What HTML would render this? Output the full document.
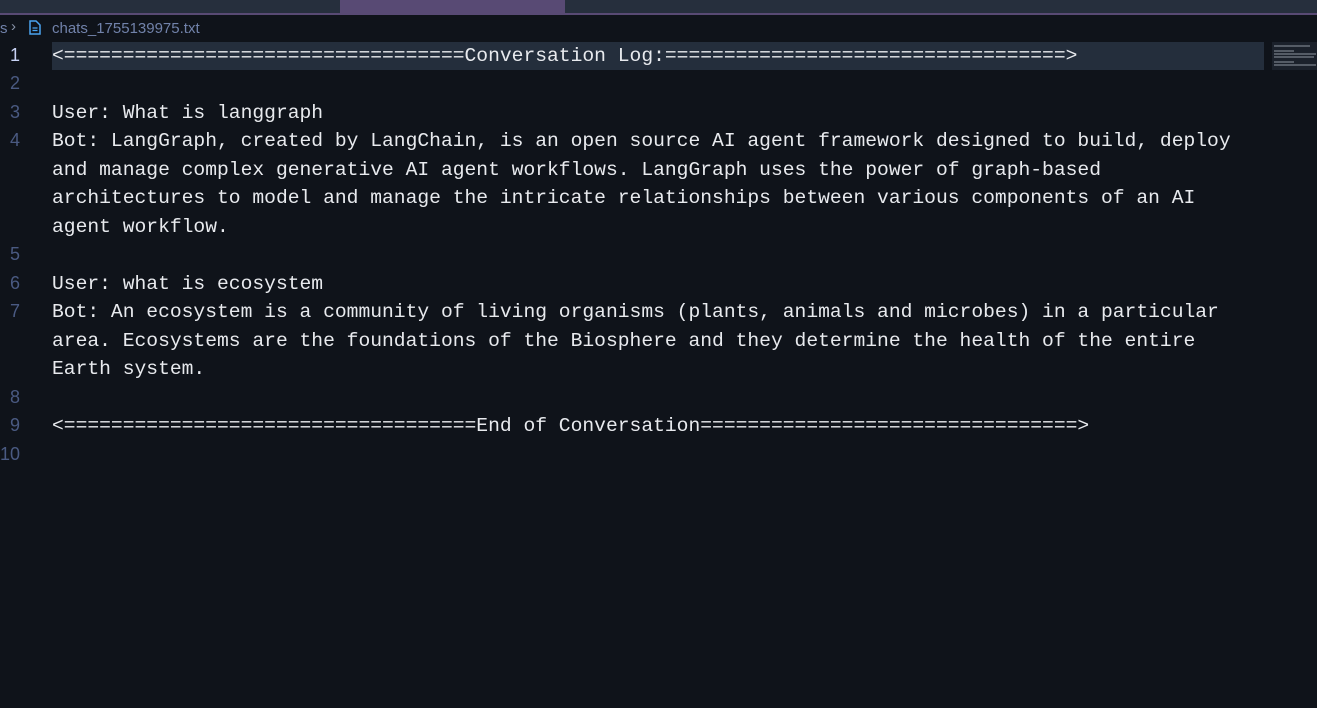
<!DOCTYPE html>
<html><head><style>
html,body{margin:0;padding:0;width:1317px;height:708px;overflow:hidden;background:#0f131a;}
.tabs{position:absolute;left:0;top:0;width:1317px;height:13px;background:#262f3d;}
.act{position:absolute;left:340px;top:0;width:225px;height:13px;background:#584a74;}
.tl{position:absolute;left:0;top:13px;width:1317px;height:2px;background:#584a74;}
.crumb{position:absolute;left:0;top:15px;height:27px;width:1317px;background:#0f131a;font:15px "Liberation Sans",sans-serif;color:#7182aa;}
.ed{position:absolute;left:0;top:44.5px;width:1317px;}
.row{position:relative;height:28.5px;line-height:28.5px;}
.ln{position:absolute;left:0;width:20px;text-align:right;font:18px "Liberation Sans",sans-serif;color:#4a5a82;}
.tx{position:absolute;left:52px;font:19.65px "Liberation Mono",monospace;color:#e8eaee;white-space:pre;}
.hl{position:absolute;left:52px;top:-3px;width:1212px;height:28.5px;background:#242e3c;}
.mm{position:absolute;left:1272px;top:42px;width:45px;height:28px;background:#1b212b;}
.mm i{position:absolute;left:2px;height:2px;background:#555c66;}
</style></head><body>
<div class="tabs"></div><div class="act"></div><div class="tl"></div>
<div class="crumb">
<span style="position:absolute;left:0;top:5px">s</span>
<span style="position:absolute;left:11px;top:3px;color:#8893a8">›</span>
<svg style="position:absolute;left:29px;top:5px" width="12" height="15" viewBox="0 0 12 15"><path d="M1 1h6l4 4v9H1z" fill="none" stroke="#4aa3f0" stroke-width="1.5"/><path d="M3.5 8h5M3.5 10.5h5" stroke="#4aa3f0" stroke-width="1.2"/></svg>
<span style="position:absolute;left:52px;top:5px">chats_1755139975.txt</span>
</div>
<div class="mm"><i style="top:3px;width:36px"></i><i style="top:8px;width:20px"></i><i style="top:11px;width:42px"></i><i style="top:14px;width:40px"></i><i style="top:19px;width:20px"></i><i style="top:22px;width:42px"></i></div>
<div class="ed">
<div class="row"><div class="hl"></div><span class="ln" style="color:#c8d3f5">1</span><span class="tx">&lt;==================================Conversation Log:==================================&gt;</span></div>
<div class="row"><span class="ln">2</span></div>
<div class="row"><span class="ln">3</span><span class="tx">User: What is langgraph</span></div>
<div class="row"><span class="ln">4</span><span class="tx">Bot: LangGraph, created by LangChain, is an open source AI agent framework designed to build, deploy</span></div>
<div class="row"><span class="tx">and manage complex generative AI agent workflows. LangGraph uses the power of graph-based</span></div>
<div class="row"><span class="tx">architectures to model and manage the intricate relationships between various components of an AI</span></div>
<div class="row"><span class="tx">agent workflow.</span></div>
<div class="row"><span class="ln">5</span></div>
<div class="row"><span class="ln">6</span><span class="tx">User: what is ecosystem</span></div>
<div class="row"><span class="ln">7</span><span class="tx">Bot: An ecosystem is a community of living organisms (plants, animals and microbes) in a particular</span></div>
<div class="row"><span class="tx">area. Ecosystems are the foundations of the Biosphere and they determine the health of the entire</span></div>
<div class="row"><span class="tx">Earth system.</span></div>
<div class="row"><span class="ln">8</span></div>
<div class="row"><span class="ln">9</span><span class="tx">&lt;===================================End of Conversation================================&gt;</span></div>
<div class="row"><span class="ln">10</span></div>
</div>
</body></html>
